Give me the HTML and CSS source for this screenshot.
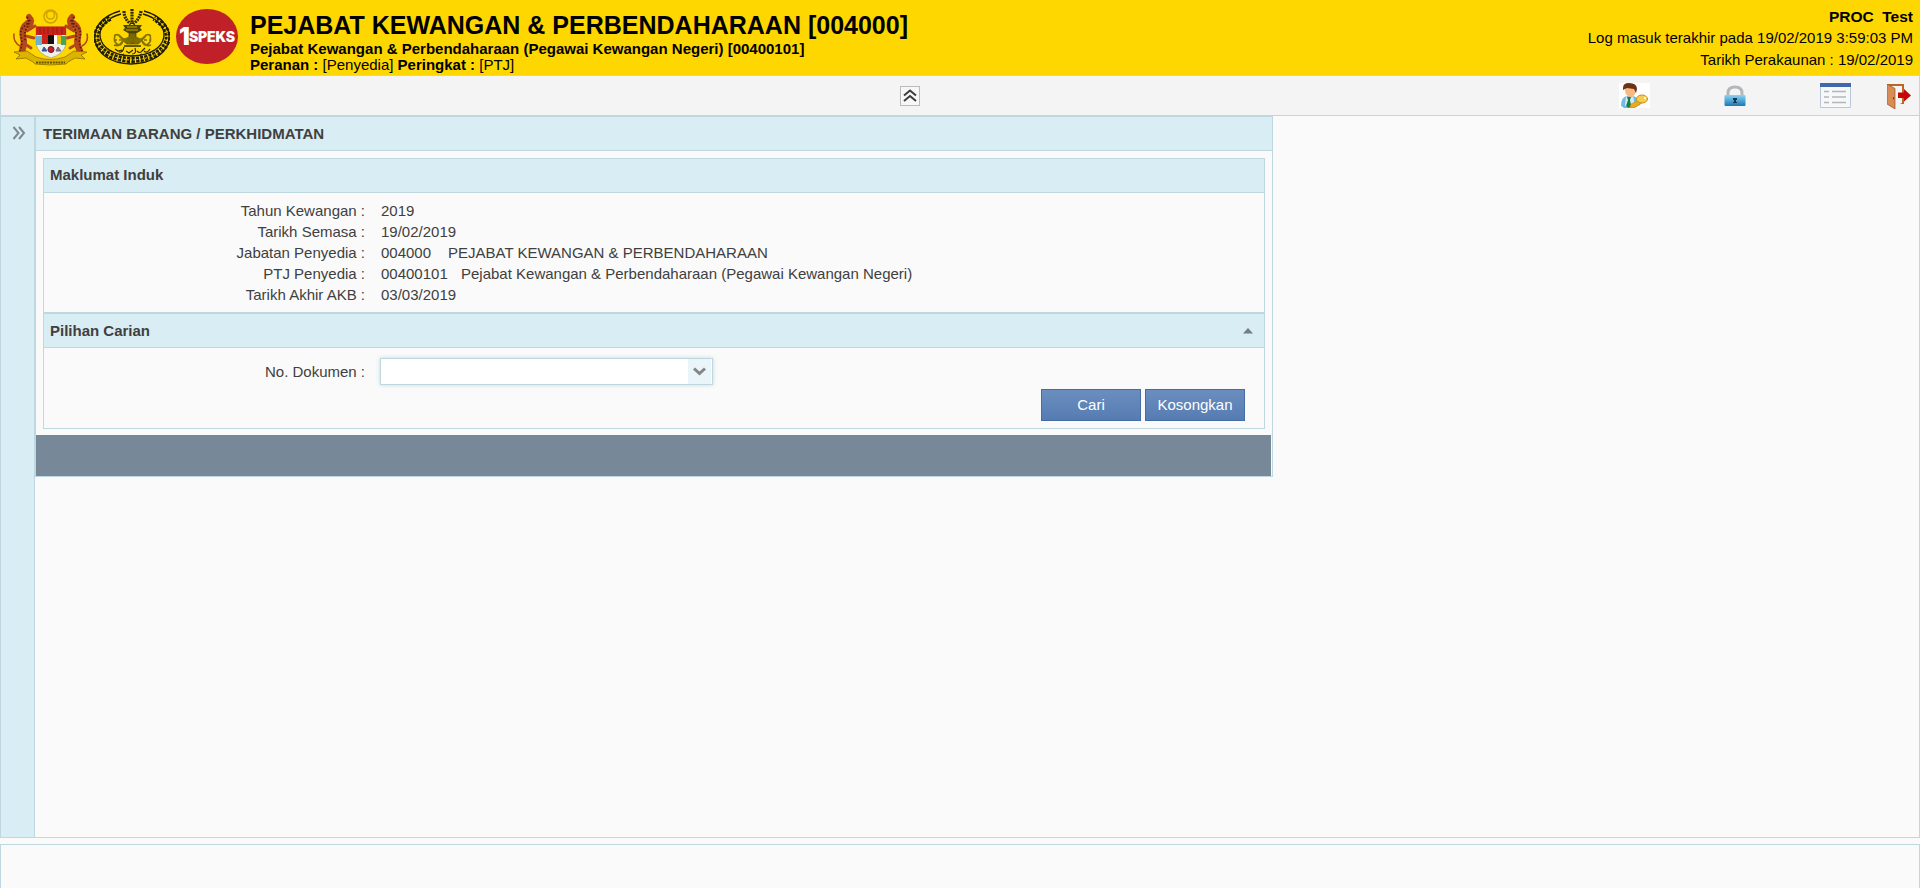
FILE: index.html
```
<!DOCTYPE html>
<html lang="ms">
<head>
<meta charset="utf-8">
<title>1SPEKS</title>
<link rel="stylesheet" href="styles.css">
</head>
<body>
<header class="banner">
  <div class="logos">
    <svg class="crest" width="76" height="58" viewBox="0 0 76 58">
      <g fill="none" stroke="#cfa500" stroke-width="1.600">
        <circle cx="37.500" cy="7.500" r="6.500"/><circle cx="37.500" cy="6" r="4"/>
      </g>
      <g fill="none" stroke="#b5471b" stroke-linecap="round" stroke-linejoin="round">
        <path d="M16 8Q20 12 16 17" stroke-width="6"/><path d="M15 14Q8 19 10 28Q12 34 9 42" stroke-width="6.500"/>
        <path d="M14 22L22 17M13 27L21 29M9 42L15 45M12 35L18 39" stroke-width="3"/>
        <path d="M59 8Q55 12 59 17" stroke-width="6"/><path d="M60 14Q67 19 65 28Q63 34 67 42" stroke-width="6.500"/>
        <path d="M61 22L53 17M62 27L54 29M67 42L60 45M64 35L57 39" stroke-width="3"/>
        <path d="M7 37Q0 33 1 25M69 37Q76 33 74 25" stroke-width="1.500"/>
      </g>
      <g fill="none" stroke="#4a1c0c" stroke-width="1.500" stroke-dasharray="1.500 1.800">
        <path d="M14 8Q17 12 13 16Q6 20 8 28Q10 34 7 42M17 11Q16 16 12 22L12 33M61 8Q58 12 62 16Q69 20 67 28Q65 34 69 42M58 11Q59 16 63 22L63 33"/>
      </g>
      <path d="M1 43l13-1 9 6q14 5 29 0l9-6 13 1-6 3 4 4-10-1-7 4-2 2q-15 2-31 0l-2-2-7-4-10 1 4-4z" fill="#dcb400" stroke="#806700" stroke-width=".700"/>
      <path d="M23 18H53V35Q51 45 38 49Q25 45 23 35z" fill="#f0f0ea" stroke="#9d8c65" stroke-width=".600"/>
      <path d="M23 17.500H53V26H23z" fill="#d0201a"/>
      <path d="M27 18v7M31 18v7M35 18v7M40 18v7M44 18v7M49 18v7" stroke="#8f2815" stroke-width="1.200"/>
      <path d="M29 26h7v9h-7z" fill="#d0201a"/><path d="M35 26h6v9h-6z" fill="#111"/><path d="M41 26h4v9h-4z" fill="#fff"/><path d="M44 26h5v9h-5z" fill="#e9c400"/>
      <path d="M23 27h6v9h-6z" fill="#67b4cc"/><path d="M48 27h5v9h-5z" fill="#46a453"/>
      <path d="M29 42l2-4 3 4z" fill="#31569b" stroke="#31569b"/><path d="M43 42l2-4 3 4z" fill="#b76c55" stroke="#4b6c9d"/><circle cx="38" cy="40.500" r="3" fill="#c51c32" stroke="#701520"/>
      <path d="M23 53.500h29" stroke="#6a5600" stroke-width="2.200" stroke-dasharray="2 .8"/>
    </svg>
    <svg class="seal" width="76" height="58" viewBox="0 0 76 58">
      <path d="M26 2C-12 12-6 54 37 55C82 54 88 12 50 2" fill="none" stroke="#1d1b00" stroke-width="1.300"/>
      <path d="M27 5C-4 13-1 46 38 47C77 46 80 13 49 5" fill="none" stroke="#1d1b00" stroke-width="1.300"/>
      <path d="M16 9C-10 24 3 50 38 51C73 50 86 24 60 9" fill="none" stroke="#1f1c00" stroke-width="6" stroke-dasharray="3.200 1.200"/>
      <path d="M16 9C-10 24 3 50 38 51C73 50 86 24 60 9" fill="none" stroke="#ffd700" stroke-width=".900" stroke-dasharray="2 1"/>
      <g fill="none" stroke="#302b00" stroke-width="3.200" stroke-dasharray="2 .8"><path d="M38 0V15M30 2Q30 10 37 15M47 2Q46 10 39 15"/></g>
      <path d="M29 16h19l-2 3 2 2-5 3h-9l-5-3 2-2z" fill="#4d4400"/><path d="M33 18h10M32 21h12" stroke="#c8aa00"/>
      <path d="M35 24h7v4l4 3-2 4H33l-2-4 4-3z" fill="#7a6900" stroke="#453c00" stroke-width=".700"/>
      <g fill="none" stroke="#857300" stroke-width="1.600"><path d="M20 27q4-3 7 1t8 0M57 27q-4-3-7 1t-8 0M20 36q5 2 8-3t8 2M57 36q-5 2-8-3t-8 2M21 27q-2 5 2 8t6-3M56 27q2 5-2 8t-6-3M25 27l8 8M52 27l-8 8"/><path d="M20 31h37" stroke-dasharray="3 2"/></g>
      <path d="M30 36h17v2H30z" fill="#655900"/>
      <path d="M21 40l3 2 4-1M30 38q-1 6-5 5M32 42l3 2 4-3M41 39q2 6-3 6M43 42q3 3 5 0l3-3M50 42q3 3 6-2M28 46l2-1M36 47h4M46 46l2-1" fill="none" stroke="#2f2a00" stroke-width="1.200"/>
    </svg>
    <div class="brand"><span class="brand-one">1</span><span class="brand-name">SPEKS</span></div>
  </div>
  <div class="office">
    <h1>PEJABAT KEWANGAN &amp; PERBENDAHARAAN [004000]</h1>
    <div class="unit">Pejabat Kewangan &amp; Perbendaharaan (Pegawai Kewangan Negeri) [00400101]</div>
    <div class="role"><b>Peranan :</b> [Penyedia] <b>Peringkat :</b> [PTJ]</div>
  </div>
  <div class="session">
    <b>PROC&nbsp; Test</b>
    <span>Log masuk terakhir pada 19/02/2019 3:59:03 PM</span>
    <span>Tarikh Perakaunan : 19/02/2019</span>
  </div>
</header>
<nav class="toolbar">
  <button class="collapse" aria-label="Tutup">
    <svg width="18" height="18" viewBox="0 0 18 18" fill="none" stroke="#3c3c3c" stroke-width="2"><path d="M3 8.500L9 3.500l6 5M3 14L9 9l6 5"/></svg>
  </button>
  <div class="tools">
    <svg class="tool-user" width="31" height="25" viewBox="0 0 31 25">
      <path fill="#fff" d="M0 0h31v25H0z"/>
      <path d="M2 23q0-9 6-10h6q6 1 7 9l-6 3H5z" fill="#72bce4"/><path d="M7 13l3 3 4-3 2 10H6z" fill="#d5ebf6"/><path d="M8 14h4l-1 3 1 5-2 3-3-2 2-6z" fill="#128044"/>
      <ellipse cx="11.500" cy="7.500" rx="5.500" ry="6.500" fill="#f6b982"/>
      <path d="M4 5Q4 0 10 0q8 0 8 6l-1 4-2-4-7-1-4 2z" fill="#6b3217"/>
      <path d="M20 17l-8 4-1 3 4 1 8-5z" fill="#e9ac20" stroke="#b98010" stroke-width=".500"/><ellipse cx="23" cy="16" rx="5.500" ry="4" fill="#f7cb50" stroke="#c8910f"/><circle cx="26" cy="15" r="1.200" fill="#fff8dc"/>
    </svg>
    <svg class="tool-lock" width="22" height="22" viewBox="0 0 22 22">
      <defs><linearGradient id="lock" x2="0" y2="1"><stop stop-color="#8bd3f3"/><stop offset="1" stop-color="#1879b4"/></linearGradient></defs>
      <path d="M4 11V8Q4 2 11 2t7 6v3" fill="none" stroke="#b2b7b9" stroke-width="3"/>
      <rect x=".500" y="10" width="21" height="11" rx="1" fill="url(#lock)"/><path d="M9 13h4v2h-1v2h1v1H9v-1h1v-2H9z" fill="#173849"/>
    </svg>
    <svg class="tool-list" width="31" height="25" viewBox="0 0 31 25">
      <path d="M.500.500h30v24H.500z" fill="#f7f8fa" stroke="#b9c6dc"/><path d="M0 0h31v4H0z" fill="#4368a9"/>
      <path d="M4 8.500h5M12 8.500h14M4 14h5M12 14h14M4 19.500h5M12 19.500h14" stroke="#b5b5b5" stroke-width="1.500"/>
    </svg>
    <svg class="tool-exit" width="24" height="25" viewBox="0 0 24 25">
      <path d="M0 0h17v20H0z" fill="#bd6427"/><path d="M2 2h13v17H2z" fill="#d9d9d9"/><path d="M15 2v17l-7 3V5L3 2z" fill="#f4f4f4"/><path d="M0 0l8 4.500V25l-8-5z" fill="#d78d55" stroke="#9d501f" stroke-width=".700"/><path d="M6.500 13v2.500" stroke="#714020"/>
      <path d="M11 8.500h6V5l7 6.500-7 6V14h-6z" fill="#c40808"/>
    </svg>
  </div>
</nav>
<main class="workspace">
  <aside class="sidebar">
    <svg width="14" height="14" viewBox="0 0 14 14" fill="none" stroke="#7e8a8e" stroke-width="2"><path d="M1.500 1l5 6-5 6M7 1l5 6-5 6"/></svg>
  </aside>
  <section class="panel">
    <h2 class="bar panel-title">TERIMAAN BARANG / PERKHIDMATAN</h2>
    <div class="panel-body">
      <section class="group">
        <h3 class="bar bar-main">Maklumat Induk</h3>
        <dl class="details">
          <dt>Tahun Kewangan :</dt><dd>2019</dd>
          <dt>Tarikh Semasa :</dt><dd>19/02/2019</dd>
          <dt>Jabatan Penyedia :</dt><dd><span class="code-dept">004000</span>PEJABAT KEWANGAN &amp; PERBENDAHARAAN</dd>
          <dt>PTJ Penyedia :</dt><dd><span class="code-ptj">00400101</span>Pejabat Kewangan &amp; Perbendaharaan (Pegawai Kewangan Negeri)</dd>
          <dt>Tarikh Akhir AKB :</dt><dd>03/03/2019</dd>
        </dl>
      </section>
      <section class="group">
        <h3 class="bar">Pilihan Carian
          <svg width="10" height="6" viewBox="0 0 10 6"><path d="M0 5.500L5 0l5 5.500z" fill="#747d80"/></svg>
        </h3>
        <form class="search">
          <div class="field">
            <label for="doc">No. Dokumen :</label>
            <div class="combo"><input id="doc" type="text"><span class="combo-button"><svg width="13" height="9" viewBox="0 0 13 9" fill="none" stroke="#858585" stroke-width="3"><path d="M1 1.500l5.500 5 5.500-5"/></svg></span></div>
          </div>
          <div class="actions"><button type="button">Cari</button><button type="button">Kosongkan</button></div>
        </form>
      </section>
    </div>
    <div class="panel-foot"></div>
  </section>
</main>
<footer class="status"></footer>
</body>
</html>
```
FILE: styles.css
```
* { box-sizing: border-box; }
html, body { height: 100%; }
body {
  margin: 0;
  display: flex;
  flex-direction: column;
  overflow: hidden;
  background: #fafafa;
  color: #404040;
  font: 15px/21px "Liberation Sans", Arial, sans-serif;
}
h1, h2, h3, dl, dd { margin: 0; }
button, input { font: inherit; }
svg { display: block; flex: none; }

.banner { display: flex; height: 75px; flex: none; background: #ffd700; color: #000; }
.logos { display: flex; align-items: flex-start; padding: 9px 0 0 13px; width: 250px; }
.seal { margin-left: 5px; }
.brand {
  display: flex; align-items: center; justify-content: center;
  width: 62px; height: 55px; margin-left: 6px;
  border-radius: 50%; background: #c02028; color: #fff;
}
.brand-one { font: 900 24px/52px Inter, sans-serif; letter-spacing: -1px; }
.brand-name { font: 900 14px/56px Inter, sans-serif; letter-spacing: -.2px; }
.office { padding-top: 11px; }
.office h1 { font-size: 25px; line-height: 29px; white-space: nowrap; }
.unit { font-weight: bold; line-height: 17px; }
.role { line-height: 16px; }
.session { display: flex; flex-direction: column; align-items: flex-end; margin-left: auto; padding: 7px 7px 0 0; }
.session b { font-size: 15.500px; line-height: 20px; }
.session span:nth-child(2) { line-height: 22px; }

.toolbar {
  display: grid; grid-template-columns: 899px 20px 1fr;
  height: 41px; flex: none;
  border: 1px solid #bfd8e0; background: #f4f4f4;
}
.collapse { grid-column: 2; width: 20px; height: 20px; margin: 10px 0 0; padding: 0; border: 1px solid #bbb; background: #f7f7f7; }
.tools { display: flex; padding-left: 699px; }
.tool-user { margin-top: 7px; }
.tool-lock { margin: 9px 0 0 74px; }
.tool-list { margin: 7px 0 0 74px; }
.tool-exit { margin: 8px 0 0 36px; }

.workspace { display: flex; align-items: flex-start; height: 722px; flex: none; border: 1px solid #bfd8e0; border-top: 0; }
.sidebar { width: 34px; align-self: stretch; padding: 9px 0 0 11px; border-top: 1px solid #bfd8e0; border-right: 1px solid #bfd8e0; background: #d9edf4; }
.panel { width: 1238px; border: 1px solid #bfd8e0; }
.bar {
  display: flex; align-items: center; justify-content: space-between;
  height: 34px; padding: 0 11px 0 6px;
  border-bottom: 1px solid #bfd8e0; background: #d9edf4;
  font-size: 15px; line-height: 21px;
}
.panel-title { padding-left: 7px; }
.bar-main { padding-bottom: 2px; }
.panel-body { padding: 7px 7px 6px; }
.group { border: 1px solid #bfd8e0; }
.details { display: grid; grid-template-columns: 321px 1fr; height: 119px; padding-top: 7px; grid-auto-rows: 21px; }
.details dt { text-align: right; }
.details dd { padding-left: 16px; }
.code-dept, .code-ptj { display: inline-block; }
.code-dept { width: 67px; }
.code-ptj { width: 80px; }
.search { height: 80px; padding-top: 10px; }
.field { display: flex; align-items: center; height: 27px; }
.field label { width: 321px; text-align: right; }
.combo { display: flex; width: 333px; height: 27px; margin-left: 15px; padding-right: 1px; border: 1px solid #bfd8e0; background: #fff; box-shadow: 0 0 4px #bfd8e0; }
.combo input { flex: 1; min-width: 0; border: 0; background: none; outline: 0; }
.combo-button { display: flex; align-items: center; justify-content: center; width: 23px; background: #eaf5f9; }
.actions { display: flex; gap: 4px; justify-content: flex-end; padding: 4px 19px 0 0; }
.actions button { width: 100px; height: 32px; padding: 0 0 2px; border: 1px solid #446da6; background: linear-gradient(#6b8ebe, #557cb2); color: #fff; }
.panel-foot { height: 41px; margin-right: 1px; background: #778899; }

.status { flex: 1; margin-top: 6px; border: 1px solid #bfd8e0; border-bottom: 0; }
```
